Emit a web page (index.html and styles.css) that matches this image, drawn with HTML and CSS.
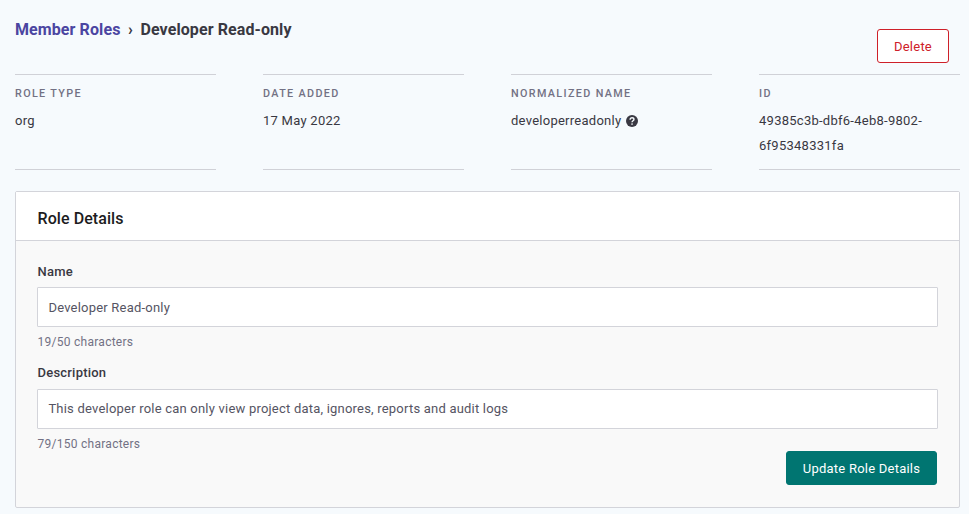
FILE: index.html
```html
<!DOCTYPE html>
<html lang="en">
<head>
<meta charset="utf-8">
<title>Developer Read-only</title>
<link rel="stylesheet" href="styles.css">
</head>
<body>
<main class="page">
  <header class="topbar">
    <nav class="breadcrumb">
      <a class="crumb-link" href="#">Member Roles</a>
      <span class="crumb-sep">›</span>
      <span class="crumb-current">Developer Read-only</span>
    </nav>
    <button class="btn btn-danger" type="button">Delete</button>
  </header>

  <dl class="facts">
    <div class="fact">
      <dt>Role type</dt>
      <dd>org</dd>
    </div>
    <div class="fact">
      <dt>Date added</dt>
      <dd>17 May 2022</dd>
    </div>
    <div class="fact">
      <dt>Normalized name</dt>
      <dd class="with-icon">developerreadonly
        <svg class="help" viewBox="0 0 24 24"><circle cx="12" cy="12" r="12"/><path d="M8.2 9.3c0-2.4 1.7-3.8 3.9-3.8s3.8 1.4 3.8 3.4c0 2.6-3.8 2.8-3.8 5.6" fill="none" stroke="#f6fafd" stroke-width="2.8"/><circle class="help-dot" cx="12.1" cy="18" r="1.7"/></svg>
      </dd>
    </div>
    <div class="fact">
      <dt>ID</dt>
      <dd>49385c3b-dbf6-4eb8-9802-6f95348331fa</dd>
    </div>
  </dl>

  <section class="card">
    <h2 class="card-title">Role Details</h2>
    <form class="card-body">
      <label class="label" for="name">Name</label>
      <input class="input" id="name" type="text" value="Developer Read-only">
      <p class="hint">19/50 characters</p>
      <label class="label label-next" for="description">Description</label>
      <input class="input input-next" id="description" type="text" value="This developer role can only view project data, ignores, reports and audit logs">
      <p class="hint hint-last">79/150 characters</p>
      <button class="btn btn-primary" type="button">Update Role Details</button>
    </form>
  </section>
</main>
</body>
</html>
```

FILE: styles.css
```css
* {
  box-sizing: border-box;
}

body {
  margin: 0;
  background: #f6fafd;
  color: #393842;
  font-family: Roboto, "Liberation Sans", sans-serif;
  font-size: 13px;
}

.page {
  height: 514px;
  padding: 0 9px 0 15px;
  overflow: hidden;
}

.topbar {
  display: flex;
  justify-content: space-between;
  align-items: flex-start;
  height: 74px;
  padding-right: 11px;
}

.breadcrumb {
  display: flex;
  padding-top: 20px;
  font-size: 16px;
  line-height: 20px;
  font-weight: 700;
  letter-spacing: 0.09px;
}

.crumb-link {
  color: #4b45a1;
  text-decoration: none;
}

.crumb-sep {
  width: 20px;
  text-align: center;
}

.btn {
  height: 34px;
  padding: 2px 0 0;
  border: 1px solid;
  border-radius: 3px;
  font: 400 13px/30px Roboto, "Liberation Sans", sans-serif;
  letter-spacing: 0.23px;
  white-space: nowrap;
}

.btn-danger {
  width: 72px;
  margin-top: 29px;
  border-color: #ce2029;
  background: #fff;
  color: #ce2029;
}

.btn-primary {
  width: 151px;
  margin: 0 1px 0 auto;
  border-color: #007571;
  background: #007571;
  color: #fff;
}

.facts {
  display: grid;
  grid-template-columns: repeat(4, 201px);
  column-gap: 47px;
  margin: 0 0 21px;
}

.fact {
  height: 96px;
  padding-top: 10px;
  border: solid #d0d1d7;
  border-width: 1px 0;
}

.fact dt {
  color: #727184;
  font-size: 10.8px;
  line-height: 18px;
  font-weight: 500;
  letter-spacing: 1.35px;
  text-transform: uppercase;
}

.fact dd {
  margin: 5px 0 0;
  line-height: 25px;
  letter-spacing: 0.26px;
}

.with-icon {
  display: flex;
  align-items: center;
  gap: 5px;
}

.help {
  width: 12px;
  height: 12px;
  margin-top: 1px;
  fill: #393842;
}

.help-dot {
  fill: #f6fafd;
}

.card {
  height: 317px;
  border: 1px solid #d3d4da;
  border-radius: 2px;
  background: #f9f9f9;
}

.card-title {
  height: 49px;
  margin: 0;
  padding: 3px 21px 0 21.5px;
  border-bottom: 1px solid #d3d4da;
  background: #fff;
  color: #1c1c21;
  font-size: 16px;
  line-height: 48px;
  font-weight: 500;
  letter-spacing: 0.08px;
}

.card-body {
  display: flex;
  flex-direction: column;
  padding: 21px 21px 0;
}

.label {
  height: 25px;
  line-height: 20px;
  padding-left: 0.6px;
  font-weight: 500;
  letter-spacing: 0.2px;
}

.label-next {
  height: 26px;
  margin-top: -1px;
}

.input {
  height: 40px;
  padding: 0 10.4px;
  border: 1px solid #d3d4da;
  border-radius: 1px;
  background: #fff;
  color: #555463;
  font: 13px Roboto, "Liberation Sans", sans-serif;
  letter-spacing: 0.21px;
}

.input-next {
  padding-bottom: 2px;
}

.hint {
  height: 37px;
  margin: 0;
  padding: 5px 0 0 0.6px;
  color: #727184;
  font-size: 12px;
  line-height: 20px;
  letter-spacing: 0.26px;
}

.hint-last {
  height: 22px;
}
```
